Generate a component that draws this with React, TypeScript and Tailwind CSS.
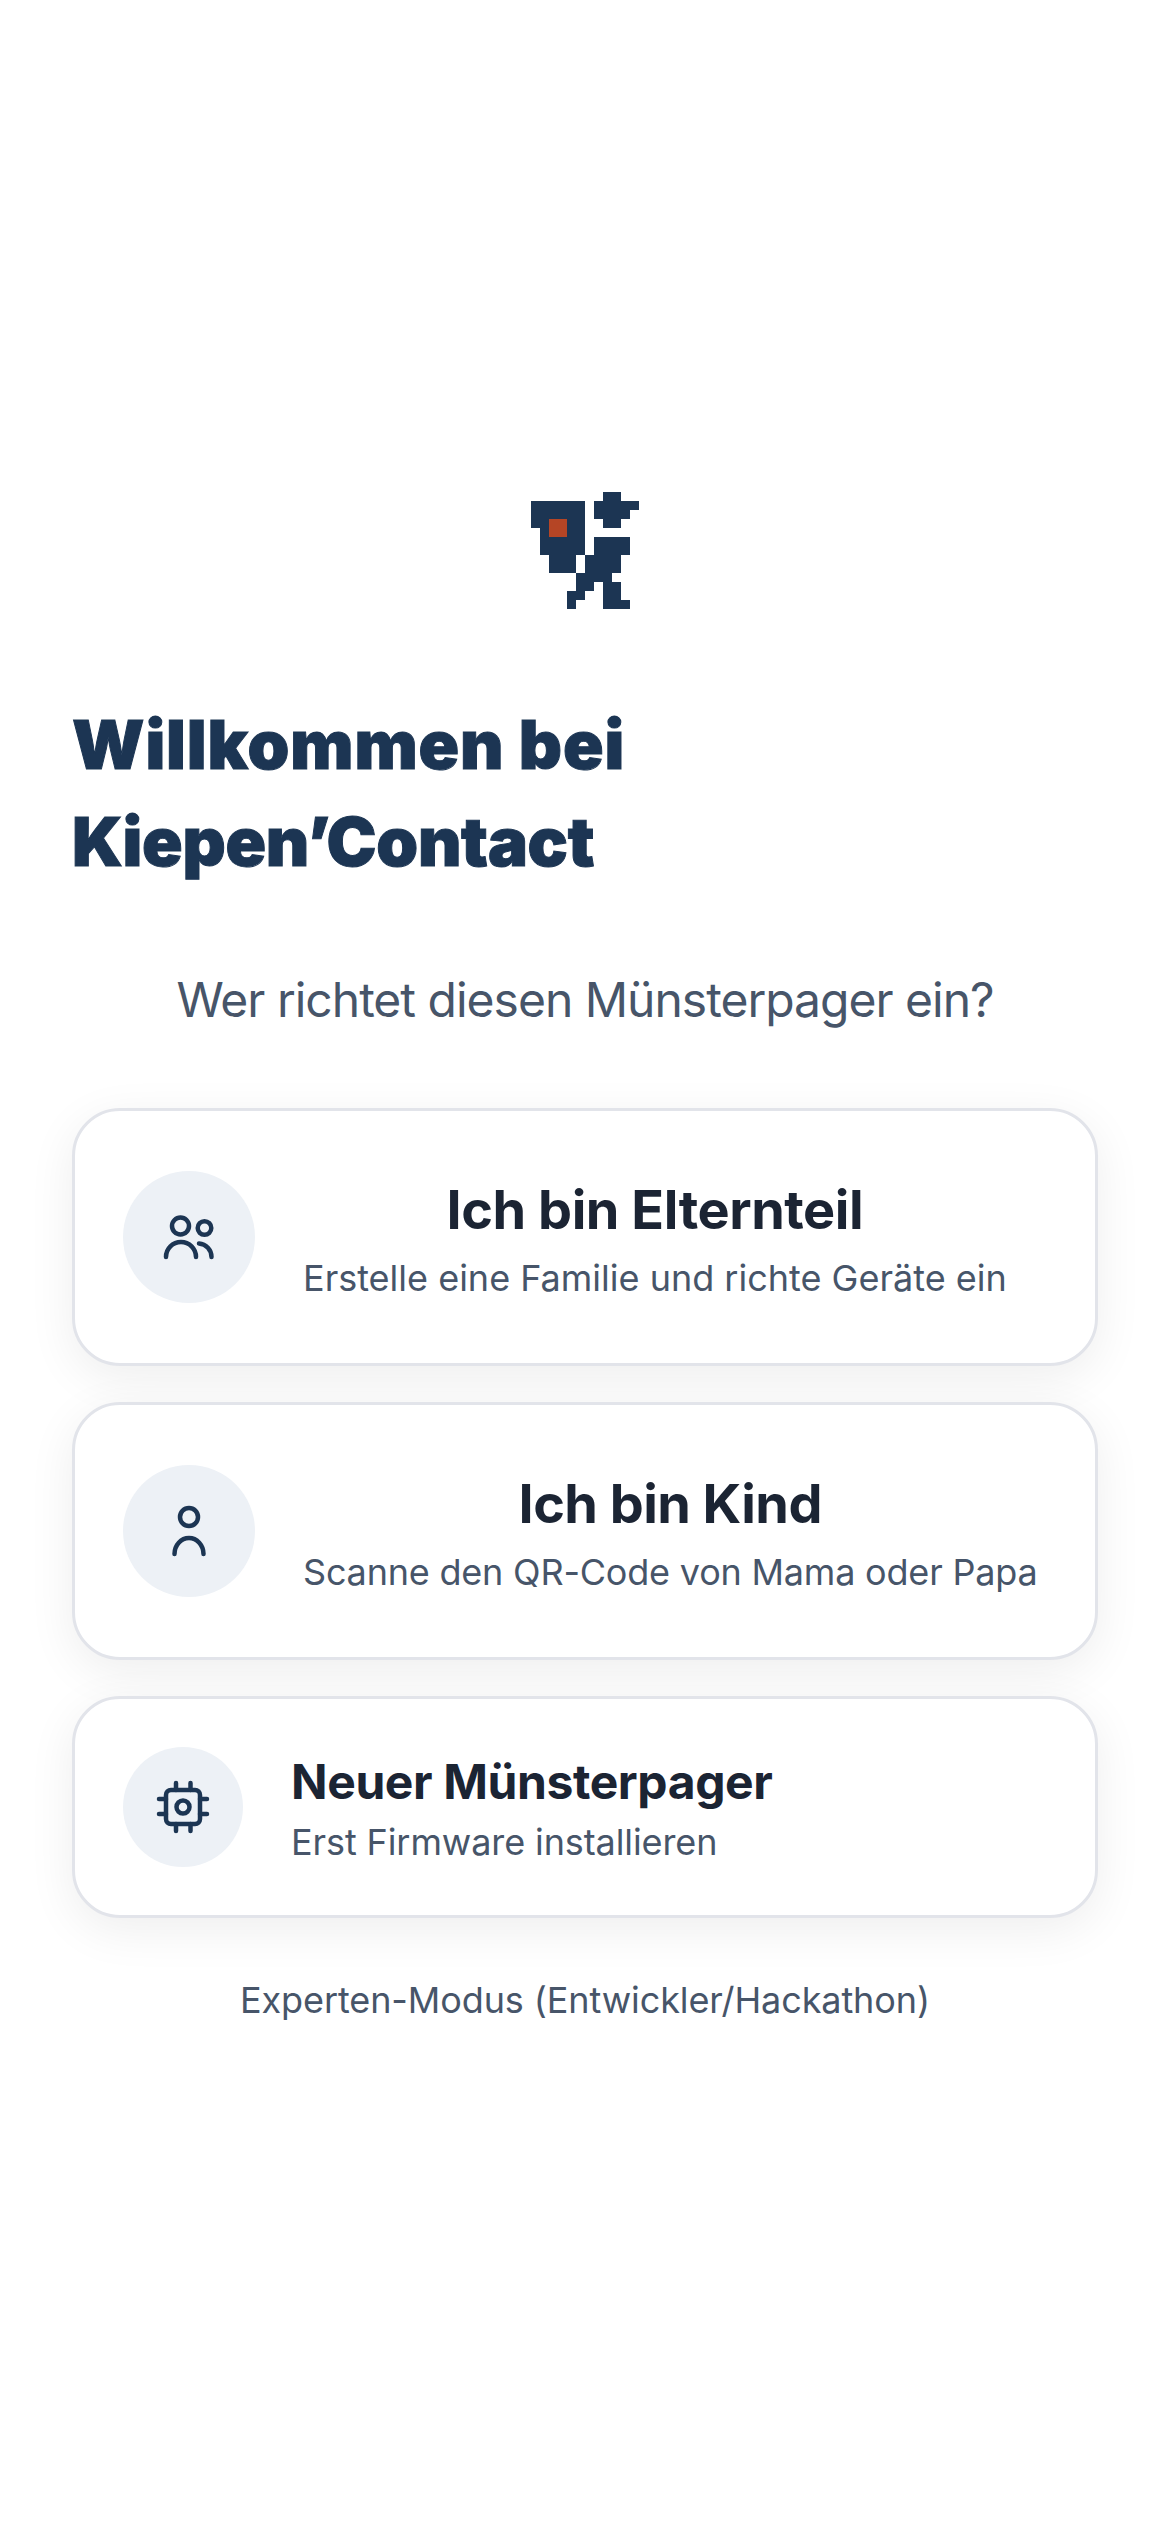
const logoRows: [number, number, number][] = [
  [0, 8, 9],
  [1, 0, 5], [1, 7, 11],
  [2, 0, 5], [2, 7, 10],
  [3, 0, 5], [3, 8, 9],
  [4, 1, 5],
  [5, 1, 5], [5, 7, 10],
  [6, 1, 5], [6, 7, 10],
  [7, 2, 4], [7, 6, 9],
  [8, 2, 4], [8, 6, 9],
  [9, 5, 8],
  [10, 5, 6], [10, 8, 9],
  [11, 4, 5], [11, 8, 9],
  [12, 4, 4], [12, 8, 10],
];

function Logo() {
  return (
    <svg width="108" height="117" viewBox="0 0 12 13" shapeRendering="crispEdges" className="block">
      {logoRows.map(([y, from, to]) => (
        <rect key={`${y}-${from}`} x={from} y={y} width={to - from + 1} height="1" fill="#1c3553" />
      ))}
      <rect x="2" y="3" width="2" height="2" fill="#b54525" />
    </svg>
  );
}

function ParentsIcon() {
  return (
    <svg width="60" height="60" viewBox="0 0 60 60" fill="none" stroke="#1c3553" strokeWidth="4.5" strokeLinecap="round">
      <circle cx="21.500" cy="19" r="8.500" />
      <circle cx="45.500" cy="21" r="6.800" />
      <path d="M7 50a15 15 0 0 1 30 0" />
      <path d="M40 36.500a13.500 13.500 0 0 1 12.500 13.500" />
    </svg>
  );
}

function ChildIcon() {
  return (
    <svg width="60" height="60" viewBox="0 0 60 60" fill="none" stroke="#1c3553" strokeWidth="4.5" strokeLinecap="round">
      <circle cx="30" cy="16" r="9" />
      <path d="M15.500 53a14.500 16 0 0 1 29 0" />
    </svg>
  );
}

function ChipIcon() {
  return (
    <svg width="60" height="60" viewBox="0 0 60 60" fill="none" stroke="#1c3553" strokeWidth="4.5" strokeLinecap="round">
      <rect x="13" y="13" width="34" height="34" rx="5" />
      <circle cx="30" cy="30" r="6.500" />
      <path d="M23 6v7M37.500 6v7M23 47v7M37.500 47v7M6 22h7M6 37h7M47 22h7M47 37h7" />
    </svg>
  );
}

const cardClass =
  "flex w-full items-center gap-12 rounded-[48px] border-[3px] border-[#e2e4ea] bg-white px-12 shadow-[0_12px_48px_rgba(0,0,0,0.07)]";

export default function App() {
  return (
    <div className="flex min-h-screen flex-col items-center justify-center bg-white px-[72px] pb-[14px] font-['Inter',sans-serif]">
      <Logo />
      <h1 className="mt-[87px] w-full text-[67px] leading-[97px] font-black tracking-[0.9px] text-[#1c3553] [-webkit-text-stroke:1px_#1c3553]">
        Willkommen bei
        <br />
        <span className="tracking-[-0.3px]">Kiepen’Contact</span>
      </h1>
      <p className="mt-[74px] text-[48px] leading-[72px] tracking-[-1px] text-[#475569]">Wer richtet diesen Münsterpager ein?</p>

      <div className="mt-[72px] flex w-full flex-col gap-[36px]">
        <button className={`${cardClass} h-[258px]`}>
          <span className="flex size-[132px] shrink-0 items-center justify-center rounded-full bg-[#edf1f6]">
            <ParentsIcon />
          </span>
          <span className="flex flex-col items-center pt-[5px]">
            <span className="text-[54px] leading-[72px] font-bold tracking-[-0.45px] text-[#1b2433]">Ich bin Elternteil</span>
            <span className="mt-[5px] text-[36px] leading-[54px] text-[#475569]">Erstelle eine Familie und richte Geräte ein</span>
          </span>
        </button>

        <button className={`${cardClass} h-[258px]`}>
          <span className="flex size-[132px] shrink-0 items-center justify-center rounded-full bg-[#edf1f6]">
            <ChildIcon />
          </span>
          <span className="flex flex-col items-center pt-[5px]">
            <span className="text-[54px] leading-[72px] font-bold tracking-[-0.55px] text-[#1b2433]">Ich bin Kind</span>
            <span className="mt-[5px] text-[36px] leading-[54px] tracking-[-0.2px] text-[#475569]">Scanne den QR-Code von Mama oder Papa</span>
          </span>
        </button>

        <button className={`${cardClass} h-[222px]`}>
          <span className="flex size-[120px] shrink-0 items-center justify-center rounded-full bg-[#edf1f6]">
            <ChipIcon />
          </span>
          <span className="flex flex-col items-start pt-[4px]">
            <span className="text-[48px] leading-[66px] font-bold tracking-[-0.4px] text-[#1b2433]">Neuer Münsterpager</span>
            <span className="text-[36px] leading-[54px] tracking-[-0.1px] text-[#475569]">Erst Firmware installieren</span>
          </span>
        </button>
      </div>

      <button className="mt-[55px] text-[36px] leading-[54px] tracking-[-0.1px] text-[#475569]">Experten-Modus (Entwickler/Hackathon)</button>
    </div>
  );
}
